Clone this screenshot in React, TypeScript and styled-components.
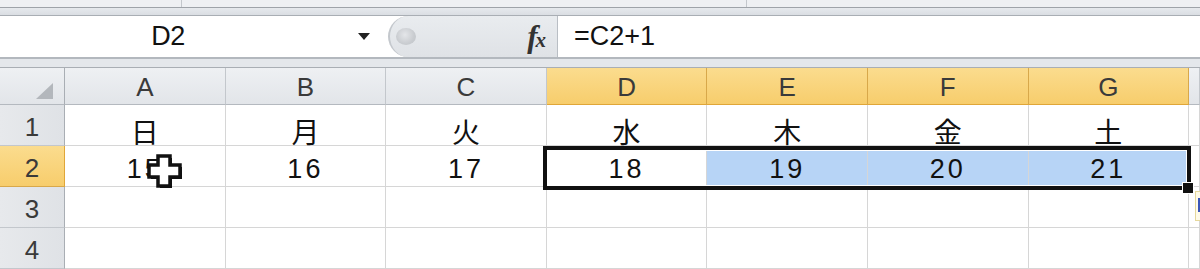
import React from "react";
import styled, { createGlobalStyle, css } from "styled-components";

const Global = createGlobalStyle`
  html, body { margin: 0; padding: 0; background: #fff; }
  body { width: 1200px; height: 269px; overflow: hidden; font-family: "Noto Sans CJK JP", "Liberation Sans", sans-serif; }
`;

const Page = styled.div`
  width: 1200px;
  height: 269px;
  display: flex;
  flex-direction: column;
  overflow: hidden;
  position: relative;
  background: #fff;
`;

const RibbonEdge = styled.div`
  height: 7px;
  display: grid;
  grid-template-columns: 182px 565px 1fr;
  background: #eef0f3;
  border-bottom: 1px solid #9ea3a9;
`;

const RibbonPart = styled.div<{ $last?: boolean }>`
  border-right: ${(p) => (p.$last ? "none" : "1px solid #c3c7cc")};
`;

const Band = styled.div`
  height: 7px;
  background: linear-gradient(#e6e9ed, #dadee3);
  border-bottom: 1px solid #a9aeb4;
`;

const FormulaBar = styled.div`
  height: 41px;
  display: flex;
  background: #fff;
  border-bottom: 2px solid #b3b8be;
`;

const NameBox = styled.div`
  width: 388px;
  display: flex;
  align-items: center;
  position: relative;
  background: #fff;
`;

const NameText = styled.div`
  width: 336px;
  text-align: center;
  font-family: "Liberation Sans", "Noto Sans", sans-serif;
  font-size: 27px;
  color: #111;
  letter-spacing: -0.5px;
`;

const DropArrow = styled.div`
  margin-left: 22px;
  width: 0;
  height: 0;
  border-left: 6px solid transparent;
  border-right: 6px solid transparent;
  border-top: 7px solid #222;
`;

const FxArea = styled.div`
  width: 170px;
  display: flex;
  align-items: center;
  justify-content: space-between;
  background: linear-gradient(#e9ecef, #dfe2e6);
  border-left: 2px solid #c4c8cd;
  border-radius: 22px 0 0 22px;
  border-right: 1px solid #b9bec4;
  padding: 0 11px 0 6px;
  box-sizing: border-box;
`;

const Knob = styled.div`
  width: 20px;
  height: 17px;
  border-radius: 50%;
  background: radial-gradient(circle at 45% 40%, #e4e6e9 0%, #c9ccd0 60%, #bfc3c7 100%);
`;

const Fx = styled.div`
  font-family: "Liberation Serif", "DejaVu Serif", serif;
  font-style: italic;
  font-weight: bold;
  font-size: 31px;
  color: #333;
  display: flex;
  align-items: baseline;
  line-height: 1;
  & span { font-size: 21px; margin-left: -2px; }
`;

const FormulaInput = styled.div`
  flex: 1;
  display: flex;
  align-items: center;
  padding-left: 16px;
  font-family: "Liberation Sans", "Noto Sans", sans-serif;
  font-size: 27px;
  color: #111;
`;

const Gap = styled.div`
  height: 8px;
  background: #e4e7eb;
  border-bottom: 1px solid #a9aeb4;
`;

const GridWrap = styled.div`
  position: relative;
  flex: 1;
`;

const Grid = styled.div`
  display: grid;
  grid-template-columns: 65px repeat(7, 160.6px) 1fr;
  grid-template-rows: 37px 41px 41px 41px 41px;
`;

const headerBase = css`
  display: flex;
  justify-content: center;
  align-items: center;
  font-family: "Liberation Sans", "Noto Sans", sans-serif;
  font-size: 26px;
  color: #3a3a3a;
  box-sizing: border-box;
`;

const ColHead = styled.div<{ $sel?: boolean }>`
  ${headerBase};
  padding-top: 3px;
  background: ${(p) =>
    p.$sel ? "linear-gradient(#fbdc8e, #f7cd6c)" : "linear-gradient(#eef0f3, #e2e5e9)"};
  border-right: 1px solid ${(p) => (p.$sel ? "#d8a84a" : "#c3c7cc")};
  border-bottom: 1px solid ${(p) => (p.$sel ? "#e0a638" : "#b4b9bf")};
`;

const RowHead = styled.div<{ $sel?: boolean }>`
  ${headerBase};
  padding-top: 4px;
  background: ${(p) =>
    p.$sel ? "linear-gradient(#fbdc8e, #f7cd6c)" : "linear-gradient(90deg, #e7e9ec, #dfe2e6)"};
  border-right: 1px solid ${(p) => (p.$sel ? "#e0a638" : "#a9aeb4")};
  border-bottom: 1px solid ${(p) => (p.$sel ? "#d8a84a" : "#c3c7cc")};
`;

const Corner = styled.div`
  background: linear-gradient(#eef0f3, #e2e5e9);
  border-right: 1px solid #a9aeb4;
  border-bottom: 1px solid #b4b9bf;
  display: flex;
  justify-content: flex-end;
  align-items: flex-end;
  padding: 0 11px 5px 0;
`;

const CornerTri = styled.div`
  width: 0;
  height: 0;
  border-left: 17px solid transparent;
  border-bottom: 16px solid #b3b7bc;
`;

const Cell = styled.div<{ $fill?: boolean; $cjk?: boolean }>`
  display: flex;
  justify-content: center;
  align-items: flex-end;
  padding-bottom: ${(p) => (p.$cjk ? "0px" : "3px")};
  box-sizing: border-box;
  background: ${(p) => (p.$fill ? "#b7d4f6" : "#fff")};
  border-right: 1px solid #d6d6d6;
  border-bottom: 1px solid #d6d6d6;
  font-family: ${(p) =>
    p.$cjk ? `"Noto Sans CJK JP", sans-serif` : `"Liberation Sans", "Noto Sans", sans-serif`};
  font-size: ${(p) => (p.$cjk ? "28px" : "27px")};
  color: #111;
  letter-spacing: ${(p) => (p.$cjk ? "0" : "3px")};
  line-height: 1;
`;

const Selection = styled.div`
  position: absolute;
  left: 543px;
  top: 78px;
  width: 648px;
  height: 44px;
  box-sizing: border-box;
  border: 4px solid #111;
  box-shadow: inset 0 0 0 1px #fff;
  pointer-events: none;
`;

const FillHandle = styled.div`
  position: absolute;
  left: 1183px;
  top: 115px;
  width: 10px;
  height: 10px;
  background: #111;
  box-shadow: 0 0 0 1px #fff;
`;

const AutoFillTip = styled.div`
  position: absolute;
  left: 1195px;
  top: 123px;
  width: 12px;
  height: 30px;
  background: #fffbe8;
  border: 1px solid #e6d89c;
  box-sizing: border-box;
  &::after {
    content: "";
    position: absolute;
    left: 2px;
    top: 6px;
    width: 3px;
    height: 14px;
    background: #3b56b8;
  }
`;

const Cursor = styled.svg`
  position: absolute;
  left: 145px;
  top: 84px;
`;

const cols = ["A", "B", "C", "D", "E", "F", "G"];
const days = ["日", "月", "火", "水", "木", "金", "土"];
const nums = ["15", "16", "17", "18", "19", "20", "21"];

const plus = "M13 4 H25 V13 H35 V25 H25 V34 H13 V25 H4 V13 H13 Z";

export default function App() {
  return (
    <Page>
      <Global />
      <RibbonEdge>
        <RibbonPart />
        <RibbonPart />
        <RibbonPart $last />
      </RibbonEdge>
      <Band />
      <FormulaBar>
        <NameBox>
          <NameText>D2</NameText>
          <DropArrow />
        </NameBox>
        <FxArea>
          <Knob />
          <Fx>
            f<span>x</span>
          </Fx>
        </FxArea>
        <FormulaInput>=C2+1</FormulaInput>
      </FormulaBar>
      <Gap />
      <GridWrap>
        <Grid>
          <Corner>
            <CornerTri />
          </Corner>
          {cols.map((c, i) => (
            <ColHead key={c} $sel={i >= 3}>
              {c}
            </ColHead>
          ))}
          <ColHead />

          <RowHead>1</RowHead>
          {days.map((d) => (
            <Cell key={d} $cjk>
              {d}
            </Cell>
          ))}
          <Cell />

          <RowHead $sel>2</RowHead>
          {nums.map((n, i) => (
            <Cell key={n} $fill={i >= 4}>
              {n}
            </Cell>
          ))}
          <Cell />

          {[3, 4].map((r) => (
            <React.Fragment key={r}>
              <RowHead>{r}</RowHead>
              {cols.map((c) => (
                <Cell key={c} />
              ))}
              <Cell />
            </React.Fragment>
          ))}
        </Grid>
        <Selection />
        <FillHandle />
        <AutoFillTip />
        <Cursor width="42" height="40" viewBox="0 0 42 40">
          <path d={plus} fill="#111" transform="translate(2 2)" />
          <path d={plus} fill="#fff" stroke="#111" strokeWidth="3.5" strokeLinejoin="miter" />
        </Cursor>
      </GridWrap>
    </Page>
  );
}
